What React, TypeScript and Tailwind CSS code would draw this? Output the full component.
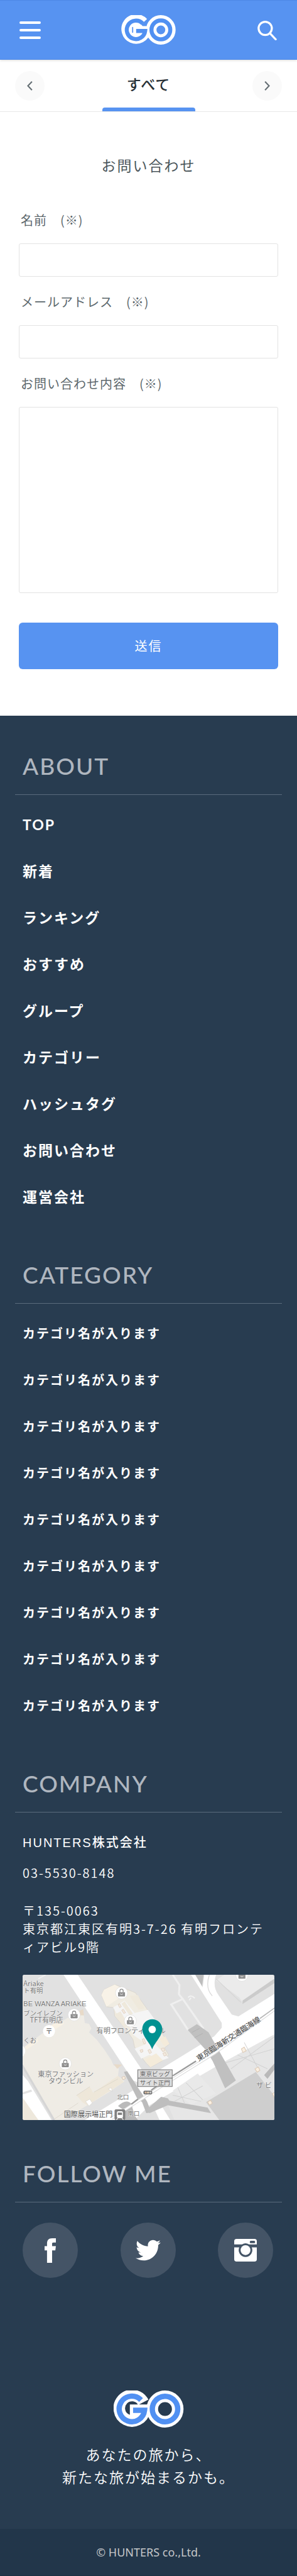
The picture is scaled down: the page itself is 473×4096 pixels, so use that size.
import type { ReactNode } from 'react';
import { FaTwitter } from 'react-icons/fa';

const aboutLinks = ['TOP', '新着', 'ランキング', 'おすすめ', 'グループ', 'カテゴリー', 'ハッシュタグ', 'お問い合わせ', '運営会社'];
const categoryLinks = Array.from({ length: 9 }, () => 'カテゴリ名が入ります');

function HeaderLogo() {
  return (
    <svg viewBox="0 0 147 80" className="h-[47px] w-[87px]" fill="none" aria-hidden="true">
      <path d="M60 19.5 A27 27 0 1 0 66.5 43 H40" stroke="#fff" strokeWidth="26" />
      <circle cx="40" cy="40" r="20" fill="#fff" />
      <path d="M38 34 H68" stroke="#fff" strokeWidth="8" />
      <rect x="29" y="32" width="3" height="16" rx="1.5" fill="#5793f1" />
      <circle cx="107" cy="40" r="26" stroke="#fff" strokeWidth="28" />
      <path d="M57.5 22.5 A25 25 0 1 0 64.4 43 H40" stroke="#5090f2" strokeWidth="11" />
      <circle cx="107" cy="40" r="25.5" stroke="#5090f2" strokeWidth="11" />
    </svg>
  );
}

function FooterLogo() {
  return (
    <svg viewBox="0 0 152 80" className="h-[59px] w-[112px]" fill="none" aria-hidden="true">
      <path d="M64 25.5 A27.5 27.5 0 1 0 66.8 42.8 H35" stroke="#fff" strokeWidth="25" />
      <circle cx="111" cy="40" r="27.5" stroke="#fff" strokeWidth="25" />
      <path d="M59.2 20.6 A27.5 27.5 0 1 0 66.8 42.8 H42" stroke="#5090f2" strokeWidth="11.5" />
      <circle cx="111" cy="40" r="27.5" stroke="#5090f2" strokeWidth="11.5" />
    </svg>
  );
}

function ShopPin({ x, y }: { x: number; y: number }) {
  return (
    <g transform={`translate(${x} ${y})`}>
      <circle r="13" fill="#fff" stroke="#d8d8d8" strokeWidth="0.8" />
      <rect x="-7.5" y="-1.5" width="15" height="9" rx="1" fill="#8e8e8e" />
      <path d="M-3.5 -1.5 V-4.5 A3.5 3.5 0 0 1 3.5 -4.5 V-1.5" fill="none" stroke="#8e8e8e" strokeWidth="1.8" />
      <path d="M-3 2 Q0 5 3 2" fill="none" stroke="#fff" strokeWidth="1.2" />
    </g>
  );
}

function AccessMap() {
  return (
    <svg viewBox="0 0 544 312" preserveAspectRatio="xMidYMid slice" className="mt-[30px] h-[231px] w-full rounded-[3px] bg-[#e2e2e2]" role="img" aria-label="地図">
      <g transform="scale(.35714 .33333) translate(-22 -84)">
        <rect x="22" y="84" width="1524" height="936" fill="#e1e1e1" />
        <path d="M120 110 L165 84 M22 640 L240 1020" stroke="#f0f0f0" strokeWidth="8" fill="none" />
        <path d="M880 870 L1160 690 L1546 450 V1020 H940 Z" fill="#e6e6e6" />
        <path d="M1190 120 L1240 84 H1530 L1546 120 L1350 262 L1330 230 Z" fill="#ebebeb" />
        <path d="M1540 110 L1350 250 V272 L1546 135 Z" fill="#cbcbcb" />
        <path d="M1190 110 L1340 262" stroke="#d6d6d6" strokeWidth="5" />
        <path d="M1063 84 H1115 L1105 170 Z" fill="#bdbdbd" />
        <path d="M272 84 H357 L740 690 L715 775 L690 765 Z" fill="#fff" />
        <path d="M22 725 L58 770 L200 1020 H120 L22 880 Z" fill="#fff" />
        <path d="M22 850 L80 830" stroke="#e3e3e3" strokeWidth="14" />
        <path d="M400 1020 L690 830 L860 690 L1180 480 L1225 425 V395 L1040 84 H1065 L1110 165 L1120 84 H1190 C1175 140 1180 175 1205 215 L1285 340 L1325 352 L1546 205 V465 L1230 650 L790 925 L700 1020 Z" fill="#fff" />
        <path d="M1150 84 C1130 150 1145 195 1168 220" stroke="#d9d9d9" strokeWidth="5" fill="none" />
        <path d="M820 950 L860 925 L915 1020 H850 Z" fill="#fff" />
        <path d="M930 84 L970 150 L967 210 L990 240 L920 275 L1022 440 M990 240 L1115 432" stroke="#efefef" strokeWidth="12" fill="none" />
        <path d="M1022 230 Q1040 210 1062 235 M1028 248 L1040 232" stroke="#f2f2f2" strokeWidth="8" fill="none" />

        <path d="M22 560 L140 465 L300 360 L365 315 L385 320 L395 350 L400 395 L425 400 L440 430 L425 455 L470 500 L520 570 L560 635 L572 665 L605 690 L600 735 L640 770 L540 845 L415 925 L300 1000 L270 1020 H215 L22 665 Z" fill="#efece5" />
        <path d="M22 870 L120 1020 H22 Z" fill="#eee8dc" />
        <path d="M38 550 L110 490 L120 515 L50 565 Z M150 440 L260 370 L275 400 L170 470 Z" fill="#f8f1e4" />
        <path d="M430 805 L450 845 L600 735 L635 775 L415 925 L385 905 L350 860 Z" fill="#eee7d9" />
        <path d="M215 1015 L360 910 M350 862 L430 805 M455 840 L600 755" stroke="#d9d4c9" strokeWidth="3" fill="none" />
        <path d="M22 665 L215 1020" stroke="#d5d5d5" strokeWidth="12" />
        <path d="M575 660 L625 663 L595 690 Z M365 318 L390 305 L395 345 L375 345 Z" fill="#e8dac8" />
        <path d="M405 900 L430 885 L445 910 L425 930 Z M540 820 L560 812 L565 835 Z" fill="#fff" stroke="#d0ccc4" strokeWidth="2" />

        <path d="M500 215 L515 180 L580 147 L625 165 L705 200 L745 260 L775 305 L810 360 L870 470 L910 530 L880 555 L905 600 L865 640 L795 680 L770 655 L735 605 L700 550 L690 500 L650 440 L620 400 L580 350 L575 295 L530 290 Z" fill="#f0ece2" stroke="#d8d3c9" strokeWidth="3" />
        <path d="M500 215 L515 180 L580 147 L610 165 L605 235 L530 290 Z" fill="#f8f2e7" />
        <path d="M570 295 L640 250 L700 330 L780 310 L840 400 L800 500 L850 560 L905 620 L855 640 L790 600 L740 625 L700 560 L770 530 L690 470 L650 370 L590 330 Z" fill="#f5f5f5" />
        <path d="M620 270 L640 255 L690 335 L670 345 Z M670 220 L720 215 L760 300 L725 310 Z M580 340 L615 320 L660 400 L640 430 Z" fill="#efe9dc" />
        <path d="M760 630 L830 590 L870 635 L795 680 Z M850 500 L885 480 L910 530 L880 545 Z" fill="#f4ebda" />
        <path d="M600 275 L610 270 L620 290 L610 296 Z M622 312 L632 306 L645 328 L635 334 Z M780 570 L792 564 L802 585 L790 592 Z M732 570 L748 565 L750 580 L738 585 Z M745 500 L757 495 L767 525 L757 530 Z M860 560 L875 555 L882 573 L868 578 Z M870 590 L885 585 L892 603 L878 608 Z" fill="#f3eadf" stroke="#dcc9b9" strokeWidth="3" />

        <path d="M1020 440 L1075 402 L1145 455 L1310 765 L1245 815 L1170 640 L1130 570 Z" fill="#c0c0c0" />
        <path d="M1060 490 L1110 462 M1045 455 L1090 430" stroke="#adadad" strokeWidth="3" />
        <path d="M1130 905 L1430 710 L1546 870 V1020 H1210 Z" fill="#cecece" />
        <path d="M1480 730 L1546 650 V690 L1500 755 Z" fill="#b9b9b9" />
        <path d="M635 710 L655 705 L775 900 L800 970 L770 975 L745 905 L715 880 Z" fill="#bcbcbc" />
        <path d="M600 930 Q650 880 680 915 L700 990 L720 1020 H640 V960 Z" fill="#bababa" />
        <path d="M770 955 L860 870 L900 880 L910 895 L1140 940 L1160 975 L900 925 L790 975 Z" fill="#bebebe" />
        <path d="M930 830 L1080 720 L1190 850 L1040 920 Z" fill="#e9e9e9" />
        <path d="M930 860 L1100 900 M960 810 L1000 910 M940 900 L1110 800 M1010 780 L1110 890 M1250 650 L1546 560 M1280 690 L1546 480 M1320 600 L1500 690 M1360 520 L1450 700" stroke="#d2d2d2" strokeWidth="4" fill="none" />
        <path d="M560 1010 L850 810 L1180 590 L1546 305" stroke="#dedede" strokeWidth="18" fill="none" />
        <path d="M560 1010 L850 810 L1180 590 L1546 305" stroke="#fff" strokeWidth="9" fill="none" />
        <path d="M1455 365 L1546 295" stroke="#b5b5b5" strokeWidth="6" fill="none" />
        <path d="M680 918 L720 885 M800 828 L855 785 M930 735 L1070 640" stroke="#9b9b9b" strokeWidth="9" fill="none" />
        <path d="M1425 690 L1445 678 L1455 700 L1438 712 Z M1343 562 L1360 550 L1372 574 L1352 585 Z M1140 903 L1158 893 L1168 912 L1150 923 Z M1530 850 L1546 840 V885 Z M623 745 L638 738 L645 752 L630 760 Z" fill="#faf0e2" stroke="#dbc8b4" strokeWidth="4" />
      </g>

      <ShopPin x={214} y={39} />
      <ShopPin x={112} y={86} />
      <ShopPin x={233} y={99} />
      <ShopPin x={93} y={191} />
      <ShopPin x={473} y={1} />
      <circle cx="58" cy="121" r="13" fill="#fff" />
      <circle cx="-6" cy="164" r="13" fill="#fff" />
      <text x="58" y="127" fontSize="15" fontWeight="700" textAnchor="middle" fill="#777">〒</text>

      <g fill="#7b7b7b" fontSize="15" stroke="#f4f4f4" strokeWidth="1" paintOrder="stroke">
        <text x="3" y="24">Ariake</text>
        <text x="3" y="39" fontSize="14">ト有明</text>
        <text x="3" y="67" className="font-['Liberation_Sans']">BE WANZA ARIAKE</text>
        <text x="3" y="88" fontSize="14">ブンイレブン</text>
        <text x="88" y="103" textAnchor="end">TFT有明店</text>
        <text x="3" y="146" fontSize="14">くお</text>
        <text x="160" y="126">有明フロンティアビル</text>
        <text x="94" y="219" textAnchor="middle">東京ファッション</text>
        <text x="94" y="234" textAnchor="middle">タウンビル</text>
        <text x="204" y="267" fontSize="13">北口</text>
        <text x="227" y="303" fontSize="13">南口</text>
        <text x="504" y="243">ザ ビ</text>
        <text x="90" y="305" fill="#555">国際展示場正門</text>
      </g>
      <text x="380" y="186" fontSize="16" fill="#444" stroke="#eee" strokeWidth="1" paintOrder="stroke" transform="rotate(-33 380 186)">東京臨海新交通臨海線</text>

      <g stroke="#777" strokeWidth="1.4" fill="#ddd">
        <rect x="249" y="204" width="74" height="18" />
        <rect x="249" y="222" width="74" height="18" />
      </g>
      <text x="286" y="218" fontSize="13" textAnchor="middle" fill="#666">東京ビッグ</text>
      <text x="286" y="236" fontSize="13" textAnchor="middle" fill="#666">サイト正門</text>
      <rect x="261" y="249" width="19" height="8" rx="3" fill="#777" />
      <circle cx="266" cy="253" r="2" fill="#d8b69a" />
      <circle cx="271" cy="253" r="2" fill="#ecd9bd" />
      <circle cx="276" cy="253" r="2" fill="#ccc" />
      <rect x="199" y="289" width="23" height="23" rx="3" fill="#808080" />
      <rect x="204" y="293" width="13" height="15" rx="3" fill="#fff" />
      <rect x="206" y="296" width="9" height="5" fill="#808080" />
      <path d="M206 308 L203 312 M215 308 L218 312" stroke="#fff" strokeWidth="1.5" />

      <path d="M280 160 C276 147 258.500 132 258.500 117 A21.500 21.500 0 0 1 301.500 117 C301.500 132 284 147 280 160 Z" fill="#009191" />
      <circle cx="280" cy="117.500" r="8" fill="#fff" />
    </svg>
  );
}

function SectionHeading({ children }: { children: ReactNode }) {
  return (
    <h2 className="border-b border-[#5a6b7d] px-3 pb-[25px] font-['Lato'] text-[37px] leading-10 font-medium tracking-[2px] text-[#afb6bf]">
      {children}
    </h2>
  );
}

function FieldLabel({ htmlFor, children }: { htmlFor: string; children: ReactNode }) {
  return (
    <label htmlFor={htmlFor} className="mb-[22px] block pl-[3px] text-xl leading-[30px] font-normal tracking-[1px] text-[#5d686d]">
      {children}
    </label>
  );
}

function SocialLink({ label, children }: { label: string; children: ReactNode }) {
  return (
    <a href="#" aria-label={label} className="flex size-[88px] items-center justify-center rounded-full bg-[#445466] text-white">
      {children}
    </a>
  );
}

export default function App() {
  return (
    <div className="w-full bg-white font-['Noto_Sans_CJK_JP',sans-serif]" lang="ja">
      <header className="relative z-10 grid h-[95px] grid-cols-3 items-center border-y border-[#4d88e5] bg-[#5793f1] px-[31px] shadow-[0_1px_4px_rgba(0,0,0,0.15)]">
        <button type="button" aria-label="メニュー" className="flex w-[34px] flex-col gap-2">
          <span className="h-1 w-full rounded-full bg-white" />
          <span className="h-1 w-full rounded-full bg-white" />
          <span className="h-1 w-full rounded-full bg-white" />
        </button>
        <a href="#" aria-label="GO" className="justify-self-center">
          <HeaderLogo />
        </a>
        <button type="button" aria-label="検索" className="justify-self-end">
          <svg viewBox="0 0 44 44" className="size-8" fill="none" stroke="#fff" strokeWidth="4.500" strokeLinecap="round" aria-hidden="true">
            <circle cx="17" cy="18" r="14.500" />
            <path d="M28 29.500 L40 42" />
          </svg>
        </button>
      </header>

      <nav className="flex h-[83px] items-center justify-between border-b border-[#e8e8e8] px-6">
        <button type="button" aria-label="前へ" className="flex size-[47px] items-center justify-center rounded-full bg-[#fafafa]">
          <svg viewBox="0 0 12 20" className="h-[15px] w-[9px]" fill="none" stroke="#656f74" strokeWidth="2.800" aria-hidden="true">
            <path d="M10.500 1 L2 10 L10.500 19" />
          </svg>
        </button>
        <a href="#" className="flex h-full w-[148px] flex-col items-center justify-end">
          <span className="pb-[22px] text-[23px] leading-8 font-medium tracking-[1px] text-[#273036]">すべて</span>
          <span className="h-1.5 w-full rounded-t-sm bg-[#5793f1]" />
        </a>
        <button type="button" aria-label="次へ" className="flex size-[47px] items-center justify-center rounded-full bg-[#fafafa]">
          <svg viewBox="0 0 12 20" className="h-[15px] w-[9px]" fill="none" stroke="#656f74" strokeWidth="2.800" aria-hidden="true">
            <path d="M1.500 1 L10 10 L1.500 19" />
          </svg>
        </button>
      </nav>

      <main className="px-[30px] pt-[68px] pb-[74px]">
        <h1 className="mb-[57px] text-center text-[23px] leading-8 font-normal tracking-[2px] text-[#4b565b]">お問い合わせ</h1>
        <form>
          <FieldLabel htmlFor="name">名前　(※)</FieldLabel>
          <input id="name" type="text" className="mb-[25px] block h-[53px] w-full rounded-[3px] border border-[#e3e3e3] px-3 text-xl" />
          <FieldLabel htmlFor="email">メールアドレス　(※)</FieldLabel>
          <input id="email" type="email" className="mb-[25px] block h-[53px] w-full rounded-[3px] border border-[#e3e3e3] px-3 text-xl" />
          <FieldLabel htmlFor="message">お問い合わせ内容　(※)</FieldLabel>
          <textarea id="message" className="mb-[47px] block h-[296px] w-full resize-none rounded-[3px] border border-[#e3e3e3] p-3 text-xl" />
          <button type="submit" className="block h-[74px] w-full rounded-md bg-[#5793f1] text-xl font-normal tracking-[2px] text-white">送信</button>
        </form>
      </main>

      <footer className="bg-[#283c50] text-white">
        <div className="px-6 pt-[60px]">
          <section>
            <SectionHeading>ABOUT</SectionHeading>
            <ul className="px-3 pt-2.5">
              {aboutLinks.map((label) => (
                <li key={label} className="flex h-[74px] items-center">
                  <a href="#" className="font-['Lato','Noto_Sans_CJK_JP',sans-serif] text-[23px] leading-8 font-bold tracking-[2px]">{label}</a>
                </li>
              ))}
            </ul>
          </section>

          <section className="pt-[67px]">
            <SectionHeading>CATEGORY</SectionHeading>
            <ul className="px-3 pt-2.5">
              {categoryLinks.map((label, index) => (
                <li key={index} className="flex h-[74px] items-center">
                  <a href="#" className="text-xl leading-[30px] font-bold tracking-[2px]">{label}</a>
                </li>
              ))}
            </ul>
          </section>

          <section className="pt-[67px]">
            <SectionHeading>COMPANY</SectionHeading>
            <div className="px-3 pt-[33px]">
              <p className="font-['Liberation_Sans','Noto_Sans_CJK_JP',sans-serif] text-xl leading-[30px] font-medium tracking-[2px]">HUNTERS株式会社</p>
              <p className="mt-[18px] text-xl leading-[30px] font-[350] tracking-[2px]">03-5530-8148</p>
              <address className="mt-[30px] text-xl leading-[29px] font-[350] tracking-[2px] break-all not-italic">
                〒135-0063<br />東京都江東区有明3-7-26 有明フロンティアビル9階
              </address>
              <AccessMap />
            </div>
          </section>

          <section className="pt-[65px]">
            <SectionHeading>FOLLOW ME</SectionHeading>
            <div className="flex justify-between pt-8 pr-[14px] pl-3">
              <SocialLink label="Facebook">
                <svg viewBox="0 0 24.500 53" className="h-[39px] w-[18px]" fill="currentColor" aria-hidden="true">
                  <path d="M5.300 53V26H0V17H5.300V11.700C5.300 4.300 8.600 0 16.300 0H24.500V9H19.200C16.800 9 16.300 10 16.300 12.300V17H24.500L23.300 26H16.300V53Z" />
                </svg>
              </SocialLink>
              <SocialLink label="Twitter">
                <FaTwitter className="size-10" aria-hidden="true" />
              </SocialLink>
              <SocialLink label="Instagram">
                <svg viewBox="0 0 48 48" className="size-9" fill="currentColor" aria-hidden="true">
                  <path fillRule="evenodd" d="M5 0H43A5 5 0 0 1 48 5V11.500H31.500A14.500 14.500 0 0 0 16.500 11.500H0V5A5 5 0 0 1 5 0ZM35.500 4A2.500 2.500 0 0 0 35.500 9H42A2.500 2.500 0 0 0 42 4Z" />
                  <path d="M0 18H10.700A14.500 14.500 0 1 0 37.300 18H48V43A5 5 0 0 1 43 48H5A5 5 0 0 1 0 43Z" />
                  <circle cx="24" cy="23.700" r="10.500" />
                </svg>
              </SocialLink>
            </div>
          </section>
        </div>

        <div className="flex flex-col items-center pt-[179px] pb-[65px]">
          <FooterLogo />
          <p className="mt-6 text-center text-[23px] leading-9 font-[350] tracking-[2px]">
            あなたの旅から、<br />新たな旅が始まるかも。
          </p>
        </div>
        <div className="flex h-[75px] items-center justify-center border-b border-[#1c2f42] bg-[#22364a]">
          <small className="font-['Noto_Sans'] text-lg leading-6 text-[#c5c7c9]">© HUNTERS co.,Ltd.</small>
        </div>
      </footer>
    </div>
  );
}
